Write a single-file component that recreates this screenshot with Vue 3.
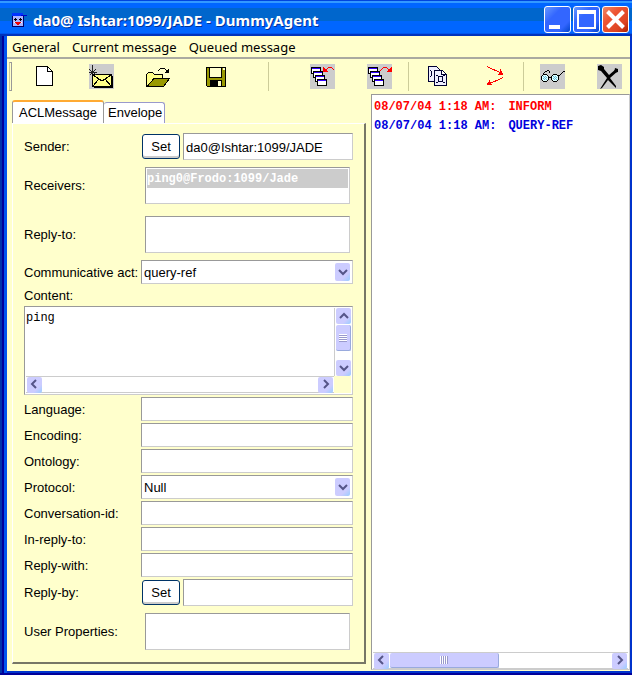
<script setup>
import { ref } from 'vue'

const menus = ['General', 'Current message', 'Queued message']

const sender = ref('da0@Ishtar:1099/JADE')
const receivers = ref(['ping0@Frodo:1099/Jade'])
const act = ref('query-ref')
const content = ref('ping')
const language = ref('')
const encoding = ref('')
const ontology = ref('')
const protocol = ref('Null')
const conversationId = ref('')
const inReplyTo = ref('')
const replyWith = ref('')
const replyBy = ref('')

const acts = ['inform', 'query-if', 'query-ref', 'request']
const protocols = ['Null', 'FIPA-Query', 'FIPA-Request']

const cascade = [[1, 3], [3, 7], [5, 11], [7, 15]]

const log = [
  { time: '08/07/04 1:18 AM:', act: 'INFORM', direction: 'in' },
  { time: '08/07/04 1:18 AM:', act: 'QUERY-REF', direction: 'out' },
]
</script>

<template>
  <div class="window">
    <header class="titlebar">
      <svg class="agent" viewBox="0 0 16 16" shape-rendering="crispEdges" aria-hidden="true">
        <rect x="1" y="3" width="12" height="12" fill="#000066" />
        <rect x="2" y="4" width="10" height="10" fill="#aab4ff" />
        <rect x="1" y="1" width="11" height="3" fill="#0033ff" />
        <rect x="10" y="3" width="6" height="1" fill="#0000cc" />
        <path d="M3 7.500h3M4.500 6v3M8 7.500h3M9.500 6v3" stroke="#000" />
        <path d="M4 10h6v1h-1v1h-1v1h-2v-1h-1v-1h-1z" fill="#ee0000" />
        <path d="M3 10h1v1h-1zM10 10h1v1h-1z" fill="#fff" />
      </svg>
      <h1>da0@ Ishtar:1099/JADE - DummyAgent</h1>
      <div class="controls">
        <button type="button" class="control" aria-label="Minimize">
          <svg viewBox="0 0 25 25"><rect x="4" y="18" width="11" height="4" fill="#fff" /></svg>
        </button>
        <button type="button" class="control" aria-label="Maximize">
          <svg viewBox="0 0 25 25"><path d="M3 3h19v19H3zM5 7v13h15V7z" fill="#fff" fill-rule="evenodd" /></svg>
        </button>
        <button type="button" class="control close" aria-label="Close">
          <svg viewBox="0 0 25 25"><path d="M4.500 4.500l16 16M20.500 4.500l-16 16" stroke="#fff" stroke-width="4" /></svg>
        </button>
      </div>
    </header>

    <div class="body">
      <nav class="menubar">
        <button v-for="menu in menus" :key="menu" type="button">{{ menu }}</button>
      </nav>

      <div class="toolbar">
        <span class="grip"></span>
        <div class="group">
          <button type="button" aria-label="New">
            <svg viewBox="0 0 25 25" shape-rendering="crispEdges">
              <path d="M4.500 2.500h11l5 5v14h-16z" fill="#fff" stroke="#000" />
              <path d="M15.500 2.500v5h5" fill="none" stroke="#000" />
            </svg>
          </button>
          <button type="button" class="shaded" aria-label="Send">
            <svg viewBox="0 0 25 25" shape-rendering="crispEdges">
              <path d="M5 12h19v12H5z" fill="#000" />
              <path d="M3.500 10.500h19v12h-19z" fill="#ffff88" stroke="#000" />
              <path d="M4 11l9 6l9-6M4 22l6-7M22 22l-6-7" fill="none" stroke="#000" />
              <path d="M3.500 1v9M0 5l3 3M7 5l-3 3M0 8.500h8M1 11l2-2M5 9l2 2" fill="none" stroke="#222" />
            </svg>
          </button>
          <button type="button" aria-label="Open">
            <svg viewBox="0 0 25 25" shape-rendering="crispEdges">
              <path d="M.5 22.500v-12l2-2h4l2 2h8v12z" fill="#ffff88" stroke="#000" />
              <path d="M1 22.500l7-8h15.500l-6 8z" fill="#999900" stroke="#000" />
              <path d="M12 7l2-2l2-1h2l3 3" fill="none" stroke="#000" />
              <path d="M23 4v5h-5z" fill="#000" />
            </svg>
          </button>
          <button type="button" aria-label="Save">
            <svg viewBox="0 0 25 25" shape-rendering="crispEdges">
              <path d="M3.500 3.500h19v19h-18l-1-1z" fill="#999900" stroke="#000" />
              <path d="M6.500 3.500h12v10h-12z" fill="#ffffcc" stroke="#000" />
              <rect x="20" y="4" width="2" height="2" fill="#ffffcc" />
              <path d="M7 16h12v7H7z" fill="#000" />
              <path d="M15 17h3v5h-3z" fill="#ffffcc" />
            </svg>
          </button>
        </div>
        <span class="divider wide"></span>
        <div class="group">
          <button type="button" class="shaded" aria-label="Read from queue">
            <svg viewBox="0 0 25 25" shape-rendering="crispEdges">
              <g v-for="[x, y] in cascade" :key="x">
                <rect :x="x" :y="y" width="10" height="7" fill="#000" />
                <rect :x="x + 1" :y="y + 1" width="8" height="1" fill="#3300ff" />
                <rect :x="x + 1" :y="y + 2" width="8" height="4" fill="#fff" />
              </g>
              <path d="M23 5h1v1h-1zM22 4h1v1h-1zM18 3h4v1h-4zM17 4h1v1h-1zM16 5h1v1h-1z" fill="#f00" />
              <path d="M13 3h1v1h1v1h1v1h1v1h1v1h-5z" fill="#f00" />
            </svg>
          </button>
          <button type="button" class="shaded" aria-label="Write to queue">
            <svg viewBox="0 0 25 25" shape-rendering="crispEdges">
              <g v-for="[x, y] in cascade" :key="x">
                <rect :x="x" :y="y" width="10" height="7" fill="#000" />
                <rect :x="x + 1" :y="y + 1" width="8" height="1" fill="#3300ff" />
                <rect :x="x + 1" :y="y + 2" width="8" height="4" fill="#fff" />
              </g>
              <path d="M13 6h1v1h-1zM14 5h1v1h-1zM15 4h1v1h-1zM16 3h4v1h-4zM20 4h1v1h-1zM21 5h1v1h-1z" fill="#f00" />
              <path d="M25 3v5h-5v-1h1v-1h1v-1h1v-1h1v-1z" fill="#f00" />
            </svg>
          </button>
        </div>
        <span class="divider"></span>
        <div class="group">
          <button type="button" aria-label="Set as current message">
            <svg viewBox="0 0 25 25" shape-rendering="crispEdges">
              <path d="M3.500 2.500h8l3 3v12h-11z" fill="#eeeeff" stroke="#000033" />
              <path d="M5 6h1v1h1v5h-1v1h-1v-1h1v-5h-1z" fill="#000033" />
              <path d="M9.500 6.500h8l4 4v11h-12z" fill="#eeeeff" stroke="#000033" />
              <path d="M16.500 6.500v4h5" fill="#fff" stroke="#000033" />
              <path d="M13.500 12.500h4v5h-4z" fill="none" stroke="#000033" />
              <path d="M11 11h2v1h-2zM18 11h2v1h-2zM11 18h2v1h-2zM18 18h2v1h-2z" fill="#000033" />
            </svg>
          </button>
          <button type="button" aria-label="Reply">
            <svg viewBox="0 0 25 25" shape-rendering="crispEdges">
              <path d="M5 2.500l15 7M21 13.500l-15 7" stroke="#f00" />
              <path d="M18 5h1v2h1v2h1v2h-5v-1h1v-2h1zM7 16h1v2h1v2h1v1h-5v-2h1v-1h1z" fill="#f00" />
            </svg>
          </button>
        </div>
        <span class="divider"></span>
        <div class="group">
          <button type="button" class="shaded" aria-label="View">
            <svg viewBox="0 0 25 25" shape-rendering="crispEdges">
              <path d="M3 10h4v1h1v1h1v4h-1v1h-1v1h-4v-1h-1v-1h-1v-4h1v-1h1zM13 10h4v1h1v1h1v4h-1v1h-1v1h-4v-1h-1v-1h-1v-4h1v-1h1z" fill="#000" />
              <path d="M3 11h4v1h1v4h-1v1h-4v-1h-1v-4h1zM13 11h4v1h1v4h-1v1h-4v-1h-1v-4h1z" fill="#ddffff" />
              <path d="M3 12h1v1h-1zM5 12h1v1h-1zM4 13h1v1h-1zM6 13h1v1h-1zM3 14h1v1h-1zM5 14h1v1h-1zM4 15h1v1h-1zM6 15h1v1h-1zM13 12h1v1h-1zM15 12h1v1h-1zM14 13h1v1h-1zM16 13h1v1h-1zM13 14h1v1h-1zM15 14h1v1h-1zM14 15h1v1h-1zM16 15h1v1h-1z" fill="#66bbdd" />
              <path d="M9 13h2v1h-2zM3 9h1v1h-1zM4 8h1v1h-1zM5 7h2v1h-2zM7 6h2v1h-2zM9 7h1v2h-1zM18 11h2v1h-2zM20 10h1v1h-1zM21 9h1v1h-1zM22 8h1v1h-1zM23 7h2v1h-2z" fill="#000" />
            </svg>
          </button>
          <button type="button" class="shaded" aria-label="Delete">
            <svg viewBox="0 0 25 25">
              <path d="M1 2l3-1l3 2v2l5 6l7-6h2v2l-8 7l6 8v2l-8-8l-6 8l-2 1l7-11l-6-7l-3-1z" fill="#000" />
              <path d="M18 4l3 1v3l-4 1z" fill="#000" />
            </svg>
          </button>
        </div>
      </div>

      <main class="panes">
        <section class="editor">
          <div class="tabs" role="tablist">
            <button type="button" role="tab" aria-selected="true" class="tab active">ACLMessage</button>
            <button type="button" role="tab" aria-selected="false" class="tab">Envelope</button>
          </div>

          <form class="panel" @submit.prevent>
            <div class="row">
              <label for="sender">Sender:</label>
              <div class="pair">
                <button type="button" class="set">Set</button>
                <input id="sender" v-model="sender" class="field tall" type="text" />
              </div>
            </div>
            <div class="row list-row">
              <span id="receivers-label">Receivers:</span>
              <ul class="list" role="listbox" aria-labelledby="receivers-label">
                <li v-for="name in receivers" :key="name" role="option" aria-selected="true">{{ name }}</li>
              </ul>
            </div>
            <div class="row list-row">
              <span id="reply-to-label">Reply-to:</span>
              <ul class="list" role="listbox" aria-labelledby="reply-to-label"></ul>
            </div>
            <div class="row">
              <label for="act">Communicative act:</label>
              <div class="combo">
                <select id="act" v-model="act" class="field">
                  <option v-for="item in acts" :key="item">{{ item }}</option>
                </select>
                <span class="knob drop"><svg viewBox="0 0 15 15"><path d="M4 5l4 4l4-4" /></svg></span>
              </div>
            </div>
            <label class="content-label" for="content">Content:</label>
            <div class="content-box">
              <textarea id="content" v-model="content" wrap="off"></textarea>
              <div class="scroll vertical">
                <button type="button" class="knob" aria-label="Scroll up"><svg viewBox="0 0 15 15"><path d="M4 9l4-4l4 4" /></svg></button>
                <span class="thumb"></span>
                <button type="button" class="knob end" aria-label="Scroll down"><svg viewBox="0 0 15 15"><path d="M4 5l4 4l4-4" /></svg></button>
              </div>
              <div class="scroll horizontal">
                <button type="button" class="knob" aria-label="Scroll left"><svg viewBox="0 0 15 15"><path d="M9 3l-4 4l4 4" /></svg></button>
                <button type="button" class="knob end" aria-label="Scroll right"><svg viewBox="0 0 15 15"><path d="M6 3l4 4l-4 4" /></svg></button>
              </div>
              <span class="corner"></span>
            </div>
            <div class="row">
              <label for="language">Language:</label>
              <input id="language" v-model="language" class="field" type="text" />
            </div>
            <div class="row">
              <label for="encoding">Encoding:</label>
              <input id="encoding" v-model="encoding" class="field" type="text" />
            </div>
            <div class="row">
              <label for="ontology">Ontology:</label>
              <input id="ontology" v-model="ontology" class="field" type="text" />
            </div>
            <div class="row">
              <label for="protocol">Protocol:</label>
              <div class="combo">
                <select id="protocol" v-model="protocol" class="field">
                  <option v-for="item in protocols" :key="item">{{ item }}</option>
                </select>
                <span class="knob drop"><svg viewBox="0 0 15 15"><path d="M4 5l4 4l4-4" /></svg></span>
              </div>
            </div>
            <div class="row">
              <label for="conversation">Conversation-id:</label>
              <input id="conversation" v-model="conversationId" class="field" type="text" />
            </div>
            <div class="row">
              <label for="in-reply-to">In-reply-to:</label>
              <input id="in-reply-to" v-model="inReplyTo" class="field" type="text" />
            </div>
            <div class="row">
              <label for="reply-with">Reply-with:</label>
              <input id="reply-with" v-model="replyWith" class="field" type="text" />
            </div>
            <div class="row">
              <label for="reply-by">Reply-by:</label>
              <div class="pair">
                <button type="button" class="set">Set</button>
                <input id="reply-by" v-model="replyBy" class="field tall" type="text" />
              </div>
            </div>
            <div class="row list-row">
              <span id="properties-label">User Properties:</span>
              <ul class="list" role="listbox" aria-labelledby="properties-label"></ul>
            </div>
          </form>
        </section>

        <section class="queue">
          <ul class="log">
            <li v-for="entry in log" :key="entry.act" :class="entry.direction">
              <span>{{ entry.time }}</span>
              <span>{{ entry.act }}</span>
            </li>
          </ul>
          <div class="scroll horizontal">
            <button type="button" class="knob" aria-label="Scroll queue left"><svg viewBox="0 0 15 15"><path d="M9 3l-4 4l4 4" /></svg></button>
            <span class="thumb"></span>
            <button type="button" class="knob end" aria-label="Scroll queue right"><svg viewBox="0 0 15 15"><path d="M6 3l4 4l-4 4" /></svg></button>
          </div>
        </section>
      </main>
    </div>
  </div>
</template>

<style>
body {
  margin: 0;
}
</style>

<style scoped>
* {
  box-sizing: border-box;
}
button {
  margin: 0;
  padding: 0;
  border: 0;
  background: none;
  color: inherit;
  font: inherit;
}
ul {
  margin: 0;
  padding: 0;
  list-style: none;
}
svg {
  display: block;
}
.window {
  display: flex;
  flex-direction: column;
  min-height: 100vh;
  padding-bottom: 2px;
  font: 13px/16px "Liberation Sans", Arial, sans-serif;
  color: #000;
  background: #000099;
}
.titlebar {
  display: flex;
  align-items: center;
  height: 36px;
  padding: 3px 3px 0 11px;
  background: linear-gradient(#0044dd 0 1px, #3399ff 1px 3px, #0066ff 3px 8px, #0066cc 8px 21px, #0066ff 21px 33px, #0055ee 33px 34px, #0033bb 34px);
}
.agent {
  width: 16px;
  height: 16px;
}
.titlebar h1 {
  flex: 1;
  margin: 0;
  padding-left: 6px;
  font: bold 15px/20px "Noto Sans", sans-serif;
  color: #fff;
  text-shadow: 1px 1px 0 #003399;
  white-space: nowrap;
}
.controls {
  display: flex;
  gap: 2px;
}
.control {
  width: 27px;
  height: 27px;
  border: 1px solid #fff;
  border-radius: 3px;
  background: linear-gradient(135deg, #6699ff 0%, #3366ff 35%, #3366ff 75%, #0044cc 100%);
}
.close {
  background: linear-gradient(135deg, #ee8866 0%, #ee5533 35%, #dd4422 75%, #aa2200 100%);
}
.body {
  flex: 1;
  display: flex;
  flex-direction: column;
  border: solid;
  border-width: 0 2px 2px 7px;
  border-color: #0033cc;
  background: #ffffcc;
  border-image: linear-gradient(90deg, #0033aa 0 2px, #000099 2px 4px, #0055ee 4px 7px, #0033cc 7px) 0 2 2 7;
}
.menubar {
  display: flex;
  gap: 12px;
  height: 23px;
  padding: 1px 5px 0;
  border-bottom: 2px solid #999999;
  border-bottom-color: #aaaaa0;
  font: 13px/20px "Noto Sans", sans-serif;
}
.toolbar {
  display: flex;
  align-items: center;
  height: 35px;
  padding: 1px 2px 2px;
}
.grip {
  width: 3px;
  height: 29px;
  border: 1px solid #999999;
  border-left-color: #cccc99;
}
.group {
  display: flex;
  gap: 32px;
}
.grip + .group {
  margin-left: 20px;
}
.group button,
.group svg {
  width: 25px;
  height: 25px;
}
.shaded {
  background: #cccccc;
}
.divider {
  width: 1px;
  height: 29px;
  margin: 0 16px;
  background: #cccc99;
}
.divider.wide {
  margin: 0 41px 0 40px;
}
.panes {
  flex: 1;
  display: grid;
  grid-template-columns: 354fr 259fr;
  gap: 5px;
  padding-left: 5px;
}
.editor {
  display: flex;
  flex-direction: column;
  min-width: 0;
  padding: 6px 0 7px;
}
.tabs {
  display: flex;
  align-items: flex-end;
  height: 23px;
}
.tab {
  height: 21px;
  padding: 0 2px 0 4px;
  border: solid #9999cc;
  border-width: 1px 1px 0 0;
  border-radius: 3px 3px 0 0;
  background: #fff;
}
.tab.active {
  height: 23px;
  padding: 0 6px;
  border: solid #999999;
  border-width: 2px 1px 0;
  border-top-color: #ffaa33;
}
.panel {
  flex: 1;
  display: flex;
  flex-direction: column;
  gap: 2px;
  padding: 9px 11px 0;
  border: solid #fff;
  border-width: 1px 2px 2px 1px;
  border-right-color: #777766;
  border-bottom-color: #777766;
}
.row {
  display: grid;
  grid-template-columns: 117px 1fr;
  align-items: center;
  white-space: nowrap;
}
.row > label,
.row > span {
  padding-top: 1px;
}
.pair {
  display: flex;
  align-items: center;
  gap: 3px;
  padding-left: 1px;
}
.field {
  width: 100%;
  min-width: 0;
  height: 24px;
  margin: 0;
  padding: 1px 2px 0;
  border: 1px solid #cccccc;
  border-top-color: #999999;
  border-left-color: #999999;
  border-radius: 0;
  background: #fff;
  color: #000;
  font: inherit;
  appearance: none;
  outline: none;
}
.field.tall {
  flex: 1;
  height: 27px;
}
.set {
  width: 38px;
  height: 25px;
  border: 1px solid #003366;
  border-radius: 3px;
  background: #fff;
  box-shadow: inset 0 -2px 0 #cccccc;
}
.list-row {
  padding: 5px 0;
}
.list {
  height: 37px;
  margin: 0 3px 0 4px;
  padding: 1px;
  border: 1px solid #cccccc;
  border-top-color: #999999;
  border-left-color: #999999;
  background: #fff;
  font: bold 12px/17px "Liberation Mono", monospace;
  overflow: hidden;
}
.list li {
  padding-top: 2px;
  background: #cccccc;
  color: #fff;
}
.combo {
  display: grid;
  align-items: center;
}
.combo > * {
  grid-area: 1 / 1;
}
.drop {
  justify-self: end;
  margin-right: 3px;
  pointer-events: none;
}
.knob {
  display: grid;
  place-items: center;
  flex: none;
  width: 15px;
  height: 16px;
  border-radius: 2px;
  background: linear-gradient(135deg, #ccccff 70%, #99ccff);
}
.knob.drop {
  height: 18px;
}
.knob svg {
  width: 15px;
  height: 15px;
  fill: none;
  stroke: #555588;
  stroke-width: 2px;
}
.content-label {
  padding-top: 1px;
  line-height: 17px;
}
.content-box {
  display: grid;
  grid-template-columns: 1fr 17px;
  grid-template-rows: 1fr 17px;
  height: 89px;
  padding: 1px;
  border: 1px solid #cccccc;
  border-top-color: #999999;
  border-left-color: #999999;
  background: #fff;
}
.content-box textarea {
  width: 100%;
  height: 100%;
  margin: 0;
  padding: 2px 0 0;
  border: 0;
  outline: none;
  resize: none;
  overflow: hidden;
  background: #fff;
  color: #000;
  font: 12px/16px "Liberation Mono", monospace;
}
.scroll {
  display: flex;
  gap: 1px;
  background: #fff;
}
.scroll .end {
  margin: auto 0 0 auto;
}
.scroll.vertical {
  flex-direction: column;
  padding-left: 1px;
  border-left: 1px solid #cccccc;
}
.scroll.horizontal {
  align-items: center;
  padding: 0 1px;
  border: solid #cccccc;
  border-width: 1px 0;
}
.scroll.horizontal .end {
  margin: 0 0 0 auto;
}
.thumb {
  display: grid;
  border-radius: 2px;
  background: #ccccff;
  border: solid #99aadd;
  border-width: 0 1px 1px 0;
}
.thumb::before {
  content: "";
  place-self: center;
  width: 8px;
  height: 8px;
}
.vertical .thumb {
  width: 15px;
  height: 26px;
}
.vertical .thumb::before {
  background: repeating-linear-gradient(#fff 0 1px, #9999cc 1px 2px);
}
.corner {
  background: #ffffcc;
}
.queue {
  display: flex;
  flex-direction: column;
  min-width: 0;
  margin-bottom: 1px;
  padding: 0 1px;
  border: 1px solid #999999;
  border-right-color: #cccccc;
  border-bottom-color: #cccccc;
  background: #fff;
}
.log {
  flex: 1;
  padding: 3px 1px;
  font: bold 12px/19px "Liberation Mono", monospace;
}
.log li {
  display: flex;
  gap: 12px;
  white-space: nowrap;
}
.in {
  color: #ff0000;
}
.out {
  color: #0000dd;
}
.queue .scroll {
  height: 17px;
}
.queue .thumb {
  width: 43%;
  height: 15px;
}
.horizontal .thumb::before {
  background: repeating-linear-gradient(90deg, #fff 0 1px, #9999cc 1px 2px);
}
</style>
